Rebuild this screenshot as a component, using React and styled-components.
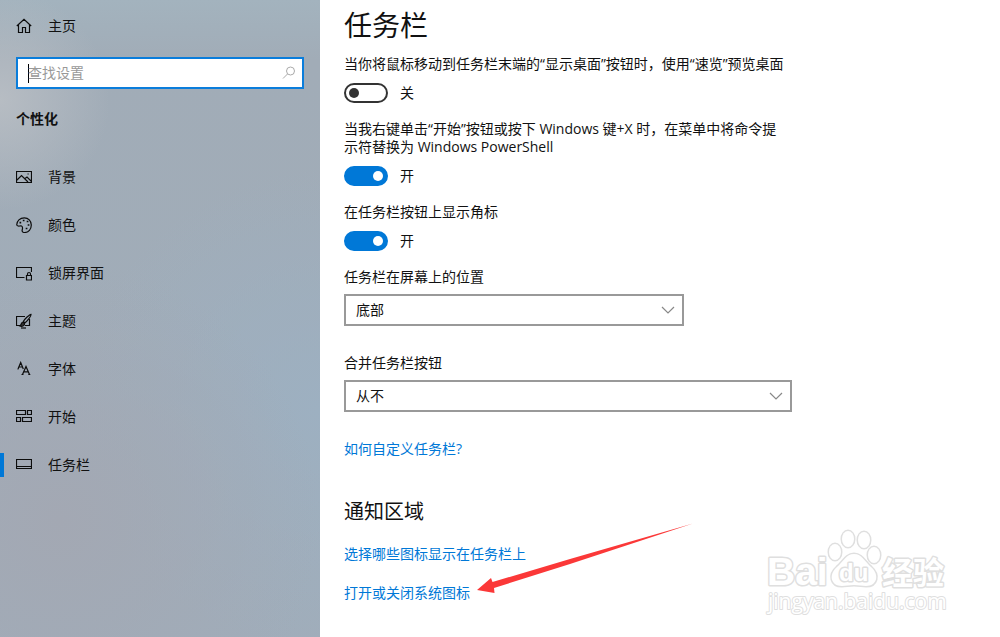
import React, { useState } from "react";
import styled, { createGlobalStyle } from "styled-components";

const GlobalStyle = createGlobalStyle`
  * {
    box-sizing: border-box;
  }
  body {
    margin: 0;
    background: #fff;
    color: #111;
    font-family: "Open Sans", "Noto Sans CJK SC", sans-serif;
    font-size: 14px;
    line-height: 18px;
  }
`;

const Page = styled.div`
  position: relative;
  display: flex;
  min-height: 100vh;
`;

const Sidebar = styled.aside`
  flex: 0 0 320px;
  padding-top: 8px;
  background: radial-gradient(
      circle at 0 100px,
      rgba(190, 194, 199, 0.75),
      rgba(190, 194, 199, 0) 110px
    ),
    radial-gradient(
      circle at 60px 520px,
      #a3a8b3,
      rgba(163, 168, 179, 0) 260px
    ),
    radial-gradient(
      circle at 320px 410px,
      #9db0c1,
      rgba(157, 176, 193, 0) 240px
    ),
    linear-gradient(#a3b3be 0, #a1acb7 60px, #a0adba 100%);
`;

const NavLink = styled.a`
  position: relative;
  display: flex;
  align-items: center;
  gap: 16px;
  height: ${({ $compact }) => ($compact ? "36px" : "48px")};
  padding: 0 16px;
  color: #111;
  text-decoration: none;
  &::before {
    content: "";
    position: absolute;
    left: 0;
    width: 4px;
    height: 24px;
    background: ${({ $active }) => ($active ? "#0078d7" : "transparent")};
  }
`;

const NavIcon = styled.svg`
  width: 16px;
  height: 16px;
  fill: none;
  stroke: #0c0c0c;
  stroke-width: 1.2;
`;

const SearchBox = styled.label`
  display: flex;
  align-items: center;
  height: 32px;
  margin: 13px 16px 0;
  padding: 0 6px 0 10px;
  border: 2px solid #0a7ddb;
  background: #fff;
`;

const Caret = styled.span`
  width: 1px;
  height: 19px;
  margin-right: -1px;
  background: #000;
`;

const SearchInput = styled.input`
  flex: 1;
  min-width: 0;
  padding: 0;
  border: none;
  outline: none;
  background: transparent;
  font: inherit;
  &::placeholder {
    color: #999;
    opacity: 1;
  }
`;

const SearchIcon = styled.svg`
  width: 14px;
  height: 14px;
  fill: none;
  stroke: #aaa;
`;

const Category = styled.h2`
  margin: 21px 16px 25px;
  font-size: 14px;
  line-height: 18px;
  font-weight: bold;
`;

const Main = styled.main`
  flex: 1;
  min-width: 0;
  padding: 7px 24px 32px;
`;

const Title = styled.h1`
  margin: 0 0 12px;
  font-size: 28px;
  line-height: 36px;
  font-weight: normal;
`;

const Setting = styled.div`
  display: flex;
  flex-direction: column;
  align-items: flex-start;
  gap: ${({ $select }) => ($select ? "8px" : "10px")};
  margin-bottom: ${({ $select }) => ($select ? "28px" : "17px")};
`;

const SettingLabel = styled.label`
  max-width: 444px;
`;

const SwitchRow = styled.div`
  display: flex;
  align-items: center;
  gap: 12px;
  height: 20px;
`;

const Switch = styled.input`
  appearance: none;
  display: flex;
  align-items: center;
  width: 44px;
  height: 20px;
  margin: 0;
  padding: 0 3px;
  border: 2px solid #333;
  border-radius: 10px;
  background: #fff;
  &::before {
    content: "";
    width: 10px;
    height: 10px;
    border-radius: 50%;
    background: #333;
  }
  &:checked {
    justify-content: flex-end;
    border-color: #0078d7;
    background: #0078d7;
  }
  &:checked::before {
    background: #fff;
  }
`;

const SelectWrapper = styled.div`
  position: relative;
  width: 100%;
  max-width: ${({ $wide }) => ($wide ? "448px" : "340px")};
`;

const Select = styled.select`
  appearance: none;
  display: block;
  width: 100%;
  height: 32px;
  padding: 0 32px 0 10px;
  border: 2px solid #999;
  border-radius: 0;
  background: #fff;
  color: #111;
  font: inherit;
`;

const Chevron = styled.svg`
  position: absolute;
  top: 12px;
  right: 9px;
  width: 14px;
  height: 8px;
  fill: none;
  stroke: #888;
  stroke-width: 1.2;
  pointer-events: none;
`;

const SectionTitle = styled.h2`
  margin: 40px 0 19px;
  font-size: 20px;
  line-height: 28px;
  font-weight: normal;
`;

const TextLink = styled.a`
  display: table;
  color: #0078d7;
  text-decoration: none;
  & + & {
    margin-top: 21px;
  }
`;

const Arrow = styled.svg`
  position: absolute;
  left: 476px;
  top: 522px;
  width: 220px;
  height: 74px;
  fill: #fb3838;
  pointer-events: none;
`;

const Watermark = styled.svg`
  position: absolute;
  right: 50px;
  bottom: 20px;
  width: 186px;
  height: 92px;
  fill: #fff;
  stroke: #dfdfdf;
  stroke-width: 3;
  stroke-linejoin: round;
  paint-order: stroke;
  pointer-events: none;
`;

const icons = {
  home: <path d="M.8 8 8 1.300 15.200 8M2.500 6.800v7.700h4v-5h3v5h4V6.800" />,
  picture: (
    <>
      <path d="M.5 2.500h15v11H.5zM1 11l4.500-4.500 6.500 6.500M9 9.500l2-1.500 4.500 4.500" />
      <path d="M11.500 5h1.200" />
    </>
  ),
  palette: (
    <>
      <path d="M.7 8C.7 4 4 .8 8.300.8c4 0 7 3 7 7.200s-2.800 7.500-6.500 7.500c-2 0-3-1-2.600-2.500.5-1.700.7-3.300-.7-4C4 8.300 2.500 10.500.7 8z" />
      <path
        d="M3.500 5.700h1.700M6.800 3.500h1.700M10.700 4.500h1.700M11.700 8h1.700M9.700 11.500h1.700"
        strokeWidth="1.7"
      />
    </>
  ),
  lock: (
    <path d="M8.500 12.500h-8v-10h15V7M10.500 10.500h5v4.500h-5zM11.500 10.500V9c0-2 3-2 3 0v1.500" />
  ),
  theme: (
    <>
      <path d="M9 3.500H.5v9H4M13.500 6v6.500H9" />
      <path d="M15 1.300c-1.500 0-6.500 5-7.500 7L9 9.800c2-1.300 6.500-6.800 6-8.500z" />
      <path
        d="M7 9c-2 .2-1.500 3-3.200 4 2 .8 5 0 4.800-2.500z"
        fill="#333"
      />
      <path d="M5 15h5" />
    </>
  ),
  font: (
    <path d="m2 8 2.700-6.500L7.300 8M3 6h3.500M6.500 13.500 10 5.500l3.500 8M7.700 10.800h4.600M5.500 13.500h2M12.300 13.500h2M1.500 8h1" />
  ),
  start: (
    <path d="M.5 1.500h9v4h-9zM11.500 1.500h4v4h-4zM.5 8.500h4v4h-4zM6.500 8.500h9v4h-9z" />
  ),
  taskbar: <path d="M.5 2.500h15v9H.5zM.5 9.500h15" />,
};

const navItems = [
  { icon: "picture", text: "背景" },
  { icon: "palette", text: "颜色" },
  { icon: "lock", text: "锁屏界面" },
  { icon: "theme", text: "主题" },
  { icon: "font", text: "字体" },
  { icon: "start", text: "开始" },
  { icon: "taskbar", text: "任务栏", active: true },
];

const Icon = ({ name }) => (
  <NavIcon viewBox="0 0 16 16" aria-hidden="true">
    {icons[name]}
  </NavIcon>
);

const SwitchSetting = ({ id, label, defaultOn }) => {
  const [on, setOn] = useState(defaultOn);
  return (
    <Setting>
      <SettingLabel htmlFor={id}>{label}</SettingLabel>
      <SwitchRow>
        <Switch
          id={id}
          type="checkbox"
          role="switch"
          checked={on}
          onChange={(e) => setOn(e.target.checked)}
        />
        <span>{on ? "开" : "关"}</span>
      </SwitchRow>
    </Setting>
  );
};

const SelectSetting = ({ id, label, options, wide }) => (
  <Setting $select>
    <SettingLabel htmlFor={id}>{label}</SettingLabel>
    <SelectWrapper $wide={wide}>
      <Select id={id}>
        {options.map((option) => (
          <option key={option}>{option}</option>
        ))}
      </Select>
      <Chevron viewBox="0 0 14 8" aria-hidden="true">
        <path d="m1 1 6 6 6-6" />
      </Chevron>
    </SelectWrapper>
  </Setting>
);

const BaiduMark = () => (
  <Watermark viewBox="0 0 186 92" aria-hidden="true">
    <text x="3" y="60" fontSize="39" fontWeight="bold" fontFamily="Liberation Sans">
      Bai
    </text>
    <g strokeWidth="3">
      <ellipse cx="71" cy="27" rx="6" ry="8" />
      <ellipse cx="84" cy="14" rx="6" ry="8" />
      <ellipse cx="100" cy="15" rx="6" ry="8" />
      <ellipse cx="110" cy="30" rx="6" ry="8" />
      <path d="M90 29c8 0 11 8 17 13 9 8 6 19-5 19-4 0-7-1-12-1s-8 1-12 1c-11 0-14-11-5-19 6-5 9-13 17-13z" />
    </g>
    <text x="75" y="56" fontSize="24" fontWeight="bold" fontFamily="Liberation Sans">
      du
    </text>
    <text x="118" y="59" fontSize="31" fontWeight="bold" fontFamily="Noto Sans CJK SC">
      经验
    </text>
    <text x="4" y="84" fontSize="21" fontFamily="Open Sans" strokeWidth="2">
      jingyan.baidu.com
    </text>
  </Watermark>
);

const App = () => (
  <>
    <GlobalStyle />
    <Page>
      <Sidebar>
        <NavLink href="#home" $compact>
          <Icon name="home" />
          主页
        </NavLink>
        <SearchBox>
          <Caret />
          <SearchInput type="text" placeholder="查找设置" aria-label="查找设置" />
          <SearchIcon viewBox="0 0 14 14" aria-hidden="true">
            <circle cx="8.500" cy="5" r="4" />
            <path d="M5.500 8 1 12.500" />
          </SearchIcon>
        </SearchBox>
        <Category>个性化</Category>
        <nav>
          {navItems.map(({ icon, text, active }) => (
            <NavLink key={icon} href={`#${icon}`} $active={active}>
              <Icon name={icon} />
              {text}
            </NavLink>
          ))}
        </nav>
      </Sidebar>
      <Main>
        <Title>任务栏</Title>
        <SwitchSetting
          id="peek"
          label="当你将鼠标移动到任务栏末端的“显示桌面”按钮时，使用“速览”预览桌面"
          defaultOn={false}
        />
        <SwitchSetting
          id="powershell"
          label="当我右键单击“开始”按钮或按下 Windows 键+X 时，在菜单中将命令提示符替换为 Windows PowerShell"
          defaultOn
        />
        <SwitchSetting id="badges" label="在任务栏按钮上显示角标" defaultOn />
        <SelectSetting
          id="position"
          label="任务栏在屏幕上的位置"
          options={["底部", "顶部", "靠左", "靠右"]}
        />
        <SelectSetting
          id="combine"
          label="合并任务栏按钮"
          options={["从不", "任务栏已满时", "始终合并按钮"]}
          wide
        />
        <TextLink href="#customize">如何自定义任务栏?</TextLink>
        <SectionTitle>通知区域</SectionTitle>
        <TextLink href="#visible-icons">选择哪些图标显示在任务栏上</TextLink>
        <TextLink href="#system-icons">打开或关闭系统图标</TextLink>
      </Main>
      <Arrow viewBox="0 0 220 74" aria-hidden="true">
        <path d="M1 68 15 56l1.500 4L94 37 217 1.500 94 42 18 66l.5 5z" />
      </Arrow>
      <BaiduMark />
    </Page>
  </>
);

export default App;
